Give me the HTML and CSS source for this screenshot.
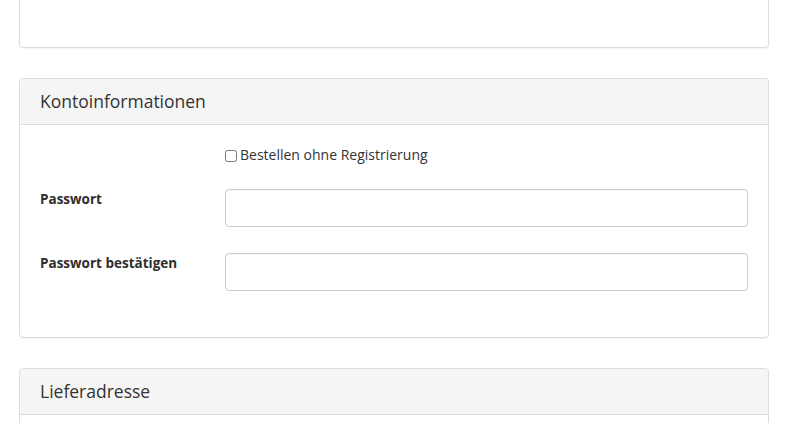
FILE: index.html
```html
<!DOCTYPE html>
<html lang="de">
<head>
<meta charset="utf-8">
<title>Checkout</title>
<link rel="stylesheet" href="styles.css">
</head>
<body>
<div class="page">
  <section class="panel panel-top">
    <div class="panel-body panel-body-top"></div>
  </section>

  <section class="panel">
    <div class="panel-heading"><h3 class="panel-title">Kontoinformationen</h3></div>
    <div class="panel-body">
      <div class="form-row form-row-check">
        <span class="spacer"></span>
        <label class="check"><input type="checkbox" class="check-box"><span>Bestellen ohne Registrierung</span></label>
      </div>
      <div class="form-row">
        <label class="control-label" for="pw">Passwort</label>
        <input id="pw" class="form-control" type="password">
      </div>
      <div class="form-row">
        <label class="control-label" for="pw2">Passwort bestätigen</label>
        <input id="pw2" class="form-control" type="password">
      </div>
    </div>
  </section>

  <section class="panel">
    <div class="panel-heading"><h3 class="panel-title">Lieferadresse</h3></div>
    <div class="panel-body panel-body-tail"></div>
  </section>
</div>
</body>
</html>
```
FILE: styles.css
```css
html, body {
  margin: 0;
  padding: 0;
  background: #fff;
}
body {
  font-family: "Open Sans", "Lato", sans-serif;
  font-size: 13px;
  line-height: 20px;
  color: #333;
  overflow: hidden;
  height: 423px;
}
.page {
  padding: 0 18px 0 19px;
  width: 750px;
}
.panel {
  border: 1px solid #ddd;
  border-radius: 4px;
  margin-bottom: 30px;
  background: #fff;
  box-shadow: 0 1px 1px rgba(0,0,0,0.04);
}
.panel-top {
  border-top: 0;
  border-radius: 0 0 4px 4px;
}
.panel-body-top {
  height: 7px;
}
.panel-heading {
  background: #f5f5f5;
  border-bottom: 1px solid #ddd;
  border-radius: 3px 3px 0 0;
  padding: 10px 20px;
  height: 25px;
}
.panel-title {
  margin: 0;
  font-size: 17.5px;
  font-weight: 400;
  line-height: 25px;
  color: #333;
}
.panel-body {
  padding: 20px;
}
.panel-body-tail {
  height: 40px;
}
.form-row {
  display: grid;
  grid-template-columns: 185px 1fr;
  margin-bottom: 26px;
}
.form-row-check {
  margin-bottom: 24px;
}
.check {
  display: flex;
  align-items: center;
  font-size: 14px;
  line-height: 20px;
  height: 20px;
}
.check-box {
  width: 12px;
  height: 12px;
  margin: 1px 3px 0 0;
}
.control-label {
  font-weight: 700;
  font-size: 13.5px;
  line-height: 20px;
  color: #2e2e2e;
}
.form-control {
  box-sizing: border-box;
  height: 38px;
  border: 1px solid #ccc;
  border-radius: 4px;
  padding: 6px 12px;
  font: inherit;
  margin: 0;
  width: 100%;
  box-shadow: inset 0 1px 1px rgba(0,0,0,0.03);
}
```
